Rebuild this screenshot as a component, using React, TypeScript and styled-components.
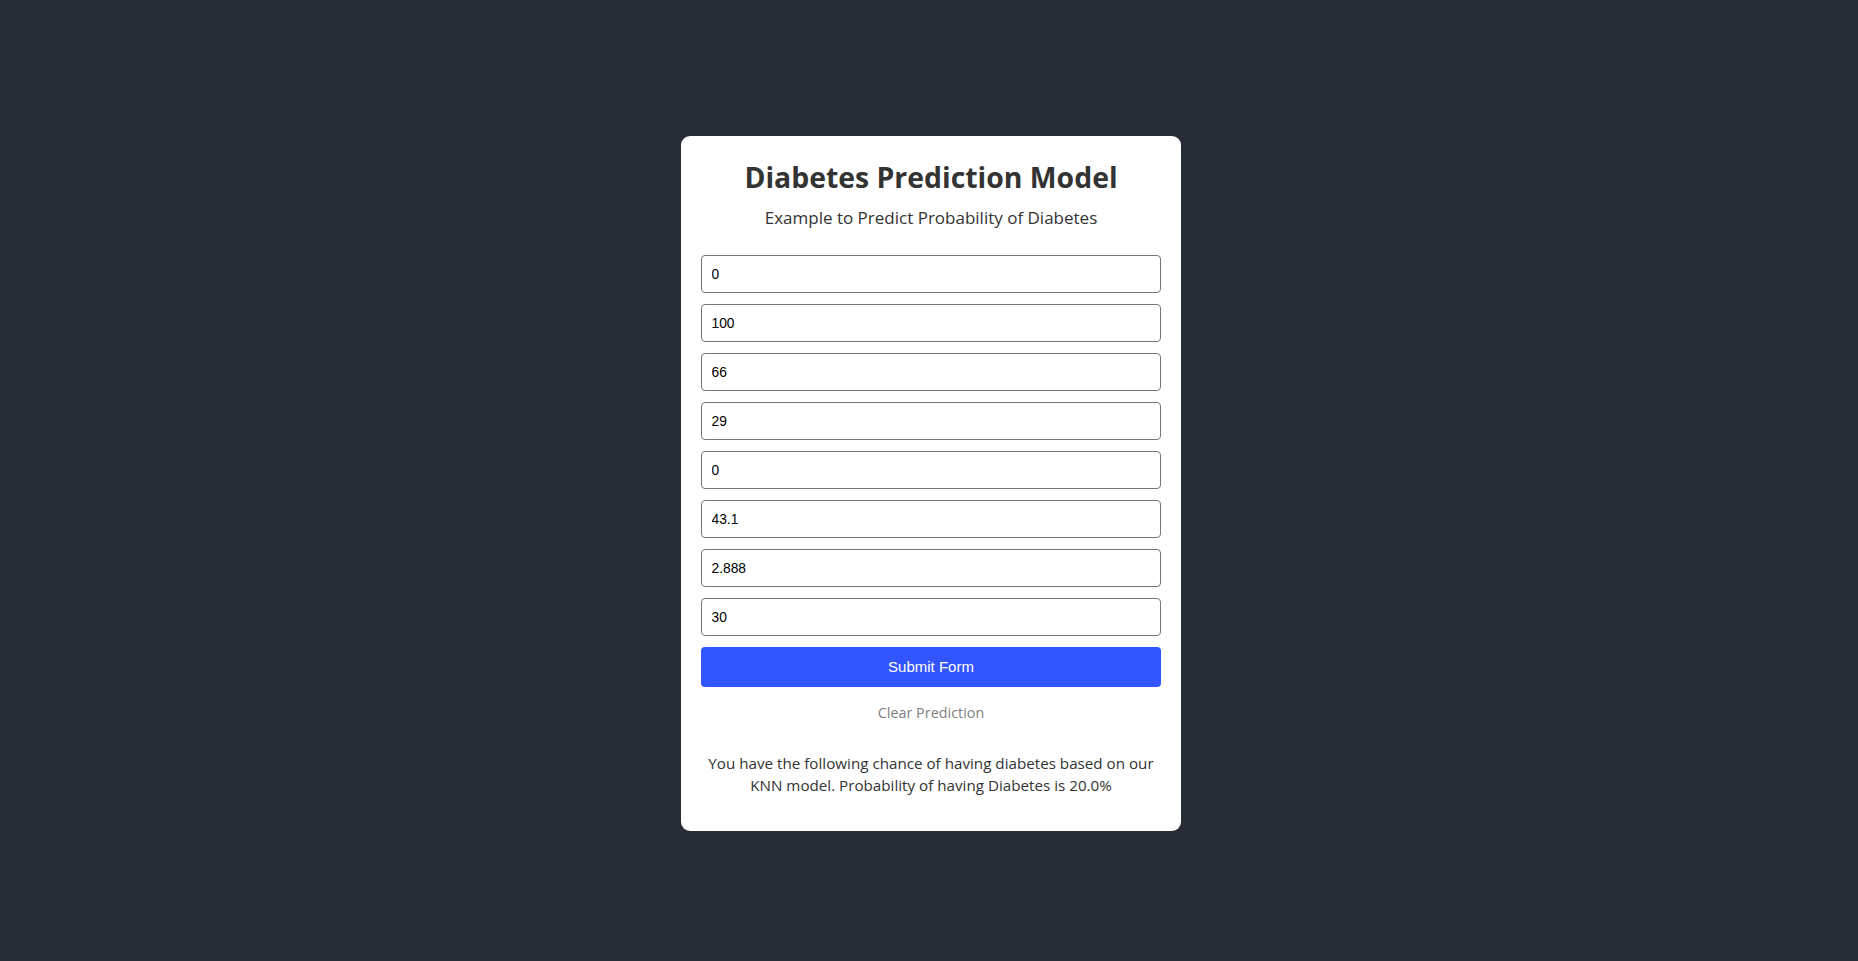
import React from "react";
import styled, { createGlobalStyle } from "styled-components";

const Global = createGlobalStyle`
  html, body { margin: 0; padding: 0; background: #282c34; }
  * { box-sizing: border-box; }
`;

const Page = styled.div`
  min-height: 100vh;
  display: flex;
  align-items: center;
  justify-content: center;
  padding: 6px 0 0 4px;
  font-family: "Open Sans", "Noto Sans", sans-serif;
`;

const Card = styled.div`
  width: 500px;
  background: #ffffff;
  border-radius: 9px;
  padding: 22px 20px 34px;
  display: flex;
  flex-direction: column;
  align-items: stretch;
  text-align: center;
`;

const Title = styled.h1`
  margin: 0;
  font-size: 28.4px;
  line-height: 38px;
  font-weight: 700;
  color: #333333;
`;

const Subtitle = styled.p`
  margin: 10.4px 0 25px;
  font-size: 17px;
  line-height: 24px;
  color: #333333;
`;

const Form = styled.form`
  display: flex;
  flex-direction: column;
  gap: 11px;
`;

const Field = styled.input`
  height: 38px;
  width: 100%;
  padding: 0 9.5px;
  border: 1px solid #767676;
  border-radius: 4px;
  font-family: "Liberation Sans", Arial, sans-serif;
  font-size: 13.8px;
  color: #000;
  background: #fff;
  outline: none;
`;

const Submit = styled.button`
  height: 40px;
  width: 100%;
  margin-top: -0.5px;
  border: none;
  border-radius: 4px;
  background: #3355ff;
  color: #ffffff;
  font-family: "Liberation Sans", Arial, sans-serif;
  font-size: 15px;
  cursor: pointer;
`;

const Clear = styled.div`
  margin-top: 15px;
  font-size: 14.4px;
  line-height: 22px;
  color: #7f7f7f;
  cursor: pointer;
`;

const Result = styled.p`
  margin: 29.5px 0 0;
  font-size: 15.2px;
  line-height: 21.7px;
  color: #333333;
`;

const values = ["0", "100", "66", "29", "0", "43.1", "2.888", "30"];

export default function App() {
  return (
    <>
      <Global />
      <Page>
        <Card>
          <Title>Diabetes Prediction Model</Title>
          <Subtitle>Example to Predict Probability of Diabetes</Subtitle>
          <Form onSubmit={(e) => e.preventDefault()}>
            {values.map((v, i) => (
              <Field key={i} defaultValue={v} />
            ))}
            <Submit type="submit">Submit Form</Submit>
          </Form>
          <Clear>Clear Prediction</Clear>
          <Result>
            You have the following chance of having diabetes based on our KNN
            model. Probability of having Diabetes is 20.0%
          </Result>
        </Card>
      </Page>
    </>
  );
}
